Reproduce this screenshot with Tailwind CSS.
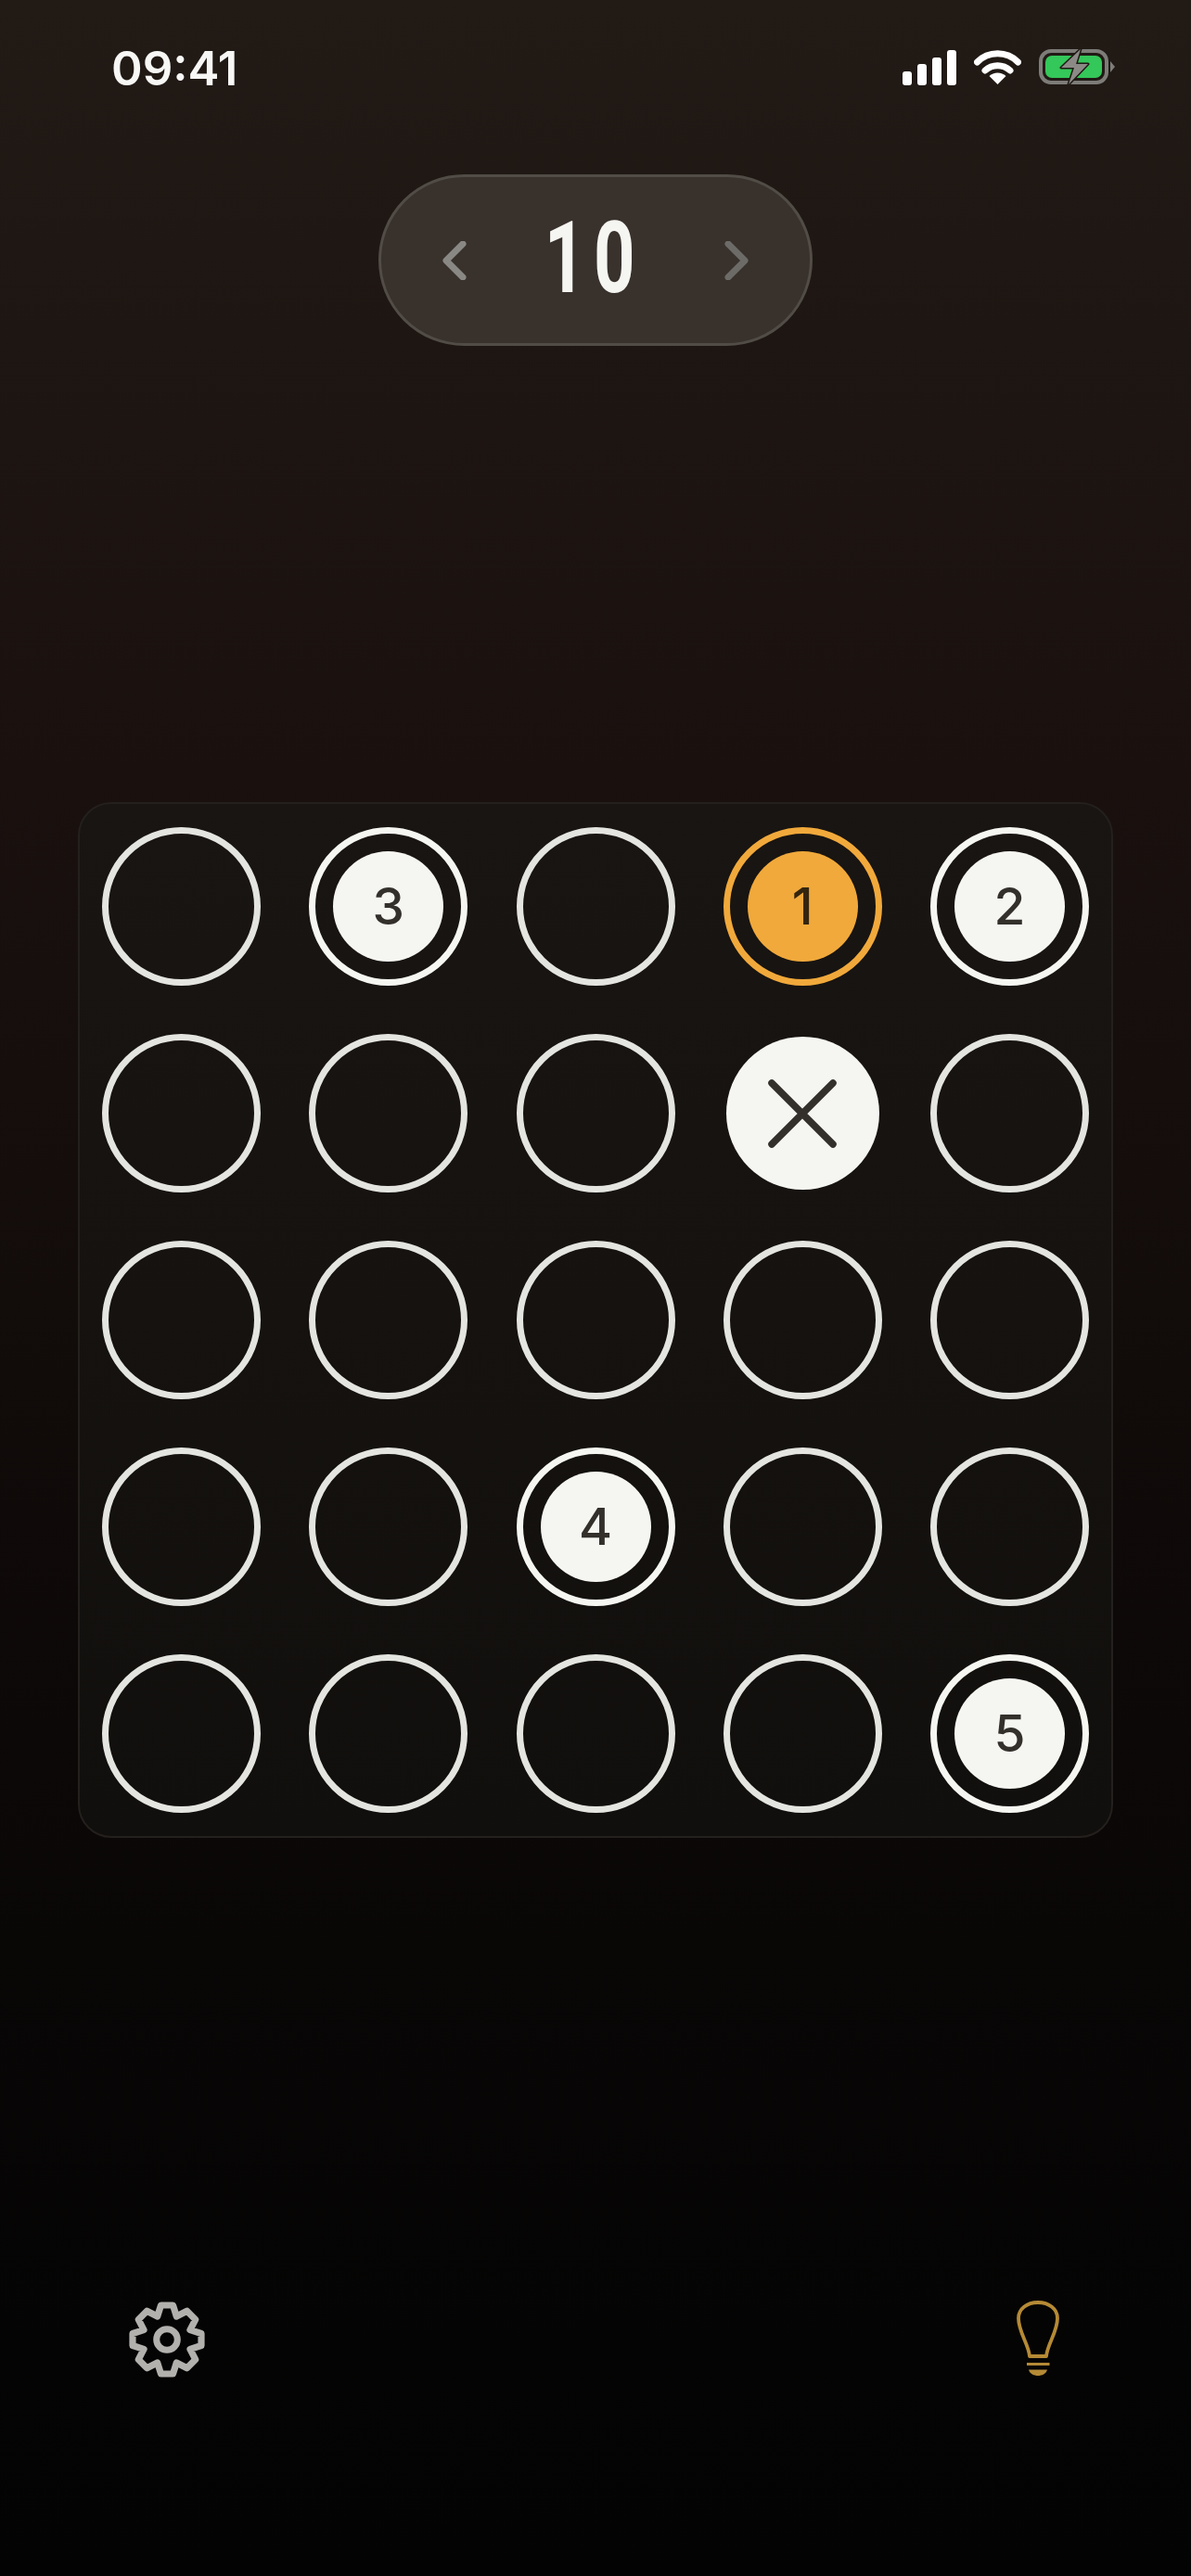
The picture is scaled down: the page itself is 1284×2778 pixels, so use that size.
<!DOCTYPE html>
<html lang="en">
<head>
  <meta charset="UTF-8">
  <meta name="viewport" content="width=device-width, initial-scale=1.0">
  <title>Number Grid</title>
  <script src="https://cdn.jsdelivr.net/npm/@tailwindcss/browser@4"></script>
</head>
<body class="bg-[#030303]">
  <div class="w-[1284px] h-[2778px] flex flex-col items-center overflow-hidden bg-linear-to-b from-[#211a15] via-[#1a110f] via-30% to-[#030303] font-['Inter',sans-serif]">

    <!-- Status bar -->
    <div class="w-full h-[188px] flex items-start justify-between pl-[120px] pr-[82px] pt-[49px]">
      <span class="text-[51px] leading-[50px] font-semibold text-[#f7f7f5]">09:41</span>
      <div class="flex items-start mt-[4px]">
        <svg width="58" height="38" viewBox="0 0 58 38" class="mt-[1px]">
          <rect x="0" y="23" width="10" height="15" rx="3" fill="#fff"/>
          <rect x="16" y="15" width="10" height="23" rx="3" fill="#fff"/>
          <rect x="32" y="8" width="10" height="30" rx="3" fill="#fff"/>
          <rect x="48" y="0" width="10" height="38" rx="3" fill="#fff"/>
        </svg>
        <svg width="51" height="38" viewBox="0 0 51 38" class="ml-[19px] mt-[1px]" fill="none">
          <path d="M3.5 13 A31 31 0 0 1 47.5 13" stroke="#fff" stroke-width="7" stroke-linecap="round"/>
          <path d="M12 22 A20 20 0 0 1 39 22" stroke="#fff" stroke-width="7" stroke-linecap="round"/>
          <path d="M25.5 37 L16.5 28 A13 13 0 0 1 34.5 28 Z" fill="#fff"/>
        </svg>
        <svg width="82" height="40" viewBox="0 0 82 40" class="ml-[19px] mt-[-1px]" fill="none">
          <rect x="2" y="3" width="71" height="34" rx="11" stroke="#7d7c78" stroke-width="4"/>
          <rect x="7" y="8" width="61" height="24" rx="7" fill="#34c759"/>
          <path d="M77 14 L82 20 L77 26 Z" fill="#7d7c78"/>
          <path d="M45 1 L24 21 H38 L32 39 L53 17 H40 Z" fill="#8b8a86" stroke="#1f1914" stroke-width="3" stroke-linejoin="round" paint-order="stroke"/>
        </svg>
      </div>
    </div>

    <!-- Level picker -->
    <div class="w-[468px] h-[185px] flex items-center justify-between px-[66px] rounded-full border-[3px] border-[#514c46] bg-[#38312c]">
      <svg width="26" height="42" viewBox="0 0 26 42" fill="none">
        <path d="M22 3 L4 21 L22 39" stroke="#8a8884" stroke-width="7" stroke-linecap="round" stroke-linejoin="round"/>
      </svg>
      <span class="font-['Roboto',sans-serif] font-bold text-[108px] leading-none tracking-[12px] text-[#f5f5f1] scale-x-[0.72] -mt-[6px] -translate-x-[2px]">10</span>
      <svg width="26" height="42" viewBox="0 0 26 42" fill="none">
        <path d="M4 3 L22 21 L4 39" stroke="#6d6b67" stroke-width="7" stroke-linecap="round" stroke-linejoin="round"/>
      </svg>
    </div>

    <!-- Board -->
    <div class="mt-[492px] w-[1116px] grid grid-cols-[repeat(5,171px)] gap-y-[52px] gap-x-[52.25px] px-[24px] py-[25px] rounded-[36px] border-2 border-[#24201d] bg-linear-to-b from-[#191512] to-[#110f0d]">
      <!-- row 1 -->
      <div class="size-[171px] rounded-full border-[7px] border-[#e4e4e0]"></div>
      <div class="size-[171px] rounded-full border-[7px] border-[#f5f5f1] flex items-center justify-center">
        <div class="size-[119px] rounded-full bg-[#f5f5f1] flex items-center justify-center text-[55px] font-medium text-[#33302c]">3</div>
      </div>
      <div class="size-[171px] rounded-full border-[7px] border-[#e4e4e0]"></div>
      <div class="size-[171px] rounded-full border-[7px] border-[#f1a93b] flex items-center justify-center">
        <div class="size-[119px] rounded-full bg-[#f1a93b] flex items-center justify-center text-[55px] font-medium text-[#33250f]">1</div>
      </div>
      <div class="size-[171px] rounded-full border-[7px] border-[#f5f5f1] flex items-center justify-center">
        <div class="size-[119px] rounded-full bg-[#f5f5f1] flex items-center justify-center text-[55px] font-medium text-[#33302c]">2</div>
      </div>
      <!-- row 2 -->
      <div class="size-[171px] rounded-full border-[7px] border-[#e4e4e0]"></div>
      <div class="size-[171px] rounded-full border-[7px] border-[#e4e4e0]"></div>
      <div class="size-[171px] rounded-full border-[7px] border-[#e4e4e0]"></div>
      <div class="size-[171px] flex items-center justify-center">
        <div class="size-[165px] rounded-full bg-[#f5f5f1] flex items-center justify-center">
          <svg width="74" height="74" viewBox="0 0 74 74" fill="none">
            <path d="M4 4 L70 70 M70 4 L4 70" stroke="#33302c" stroke-width="7.5" stroke-linecap="round"/>
          </svg>
        </div>
      </div>
      <div class="size-[171px] rounded-full border-[7px] border-[#e4e4e0]"></div>
      <!-- row 3 -->
      <div class="size-[171px] rounded-full border-[7px] border-[#e4e4e0]"></div>
      <div class="size-[171px] rounded-full border-[7px] border-[#e4e4e0]"></div>
      <div class="size-[171px] rounded-full border-[7px] border-[#e4e4e0]"></div>
      <div class="size-[171px] rounded-full border-[7px] border-[#e4e4e0]"></div>
      <div class="size-[171px] rounded-full border-[7px] border-[#e4e4e0]"></div>
      <!-- row 4 -->
      <div class="size-[171px] rounded-full border-[7px] border-[#e4e4e0]"></div>
      <div class="size-[171px] rounded-full border-[7px] border-[#e4e4e0]"></div>
      <div class="size-[171px] rounded-full border-[7px] border-[#f5f5f1] flex items-center justify-center">
        <div class="size-[119px] rounded-full bg-[#f5f5f1] flex items-center justify-center text-[55px] font-medium text-[#33302c]">4</div>
      </div>
      <div class="size-[171px] rounded-full border-[7px] border-[#e4e4e0]"></div>
      <div class="size-[171px] rounded-full border-[7px] border-[#e4e4e0]"></div>
      <!-- row 5 -->
      <div class="size-[171px] rounded-full border-[7px] border-[#e4e4e0]"></div>
      <div class="size-[171px] rounded-full border-[7px] border-[#e4e4e0]"></div>
      <div class="size-[171px] rounded-full border-[7px] border-[#e4e4e0]"></div>
      <div class="size-[171px] rounded-full border-[7px] border-[#e4e4e0]"></div>
      <div class="size-[171px] rounded-full border-[7px] border-[#f5f5f1] flex items-center justify-center">
        <div class="size-[119px] rounded-full bg-[#f5f5f1] flex items-center justify-center text-[55px] font-medium text-[#33302c]">5</div>
      </div>
    </div>

    <!-- Bottom actions -->
    <div class="mt-[478px] w-full flex justify-between pl-[120px] pr-[104px]">
      <svg width="120" height="120" viewBox="-60 -63 120 120" fill="none">
        <path d="M-6.5 -37 L6.5 -37 L10.33 -24.94 L21.57 -30.76 L30.76 -21.57 L24.94 -10.33 L37 -6.5 L37 6.5 L24.94 10.33 L30.76 21.57 L21.57 30.76 L10.33 24.94 L6.5 37 L-6.5 37 L-10.33 24.94 L-21.57 30.76 L-30.76 21.57 L-24.94 10.33 L-37 6.5 L-37 -6.5 L-24.94 -10.33 L-30.76 -21.57 L-21.57 -30.76 L-10.33 -24.94 Z" stroke="#b3b1ae" stroke-width="7.2" stroke-linejoin="round"/>
        <circle cx="0" cy="0" r="11.3" stroke="#b3b1ae" stroke-width="7"/>
      </svg>
      <svg width="120" height="120" viewBox="0 0 120 120" fill="none">
        <path d="M50 81 H68 C69 68 80 55 80 40 C80 30 71 23 59 23 C47 23 38 30 38 40 C38 55 49 68 50 81 Z" stroke="#b58a35" stroke-width="3.8" stroke-linejoin="round"/>
        <path d="M47 89.5 H71.5" stroke="#b58a35" stroke-width="3"/>
        <path d="M49 95.5 H69 C68 100 63 102 59 102 C55 102 50 100 49 95.5 Z" fill="#b58a35"/>
      </svg>
    </div>
  </div>
</body>
</html>
